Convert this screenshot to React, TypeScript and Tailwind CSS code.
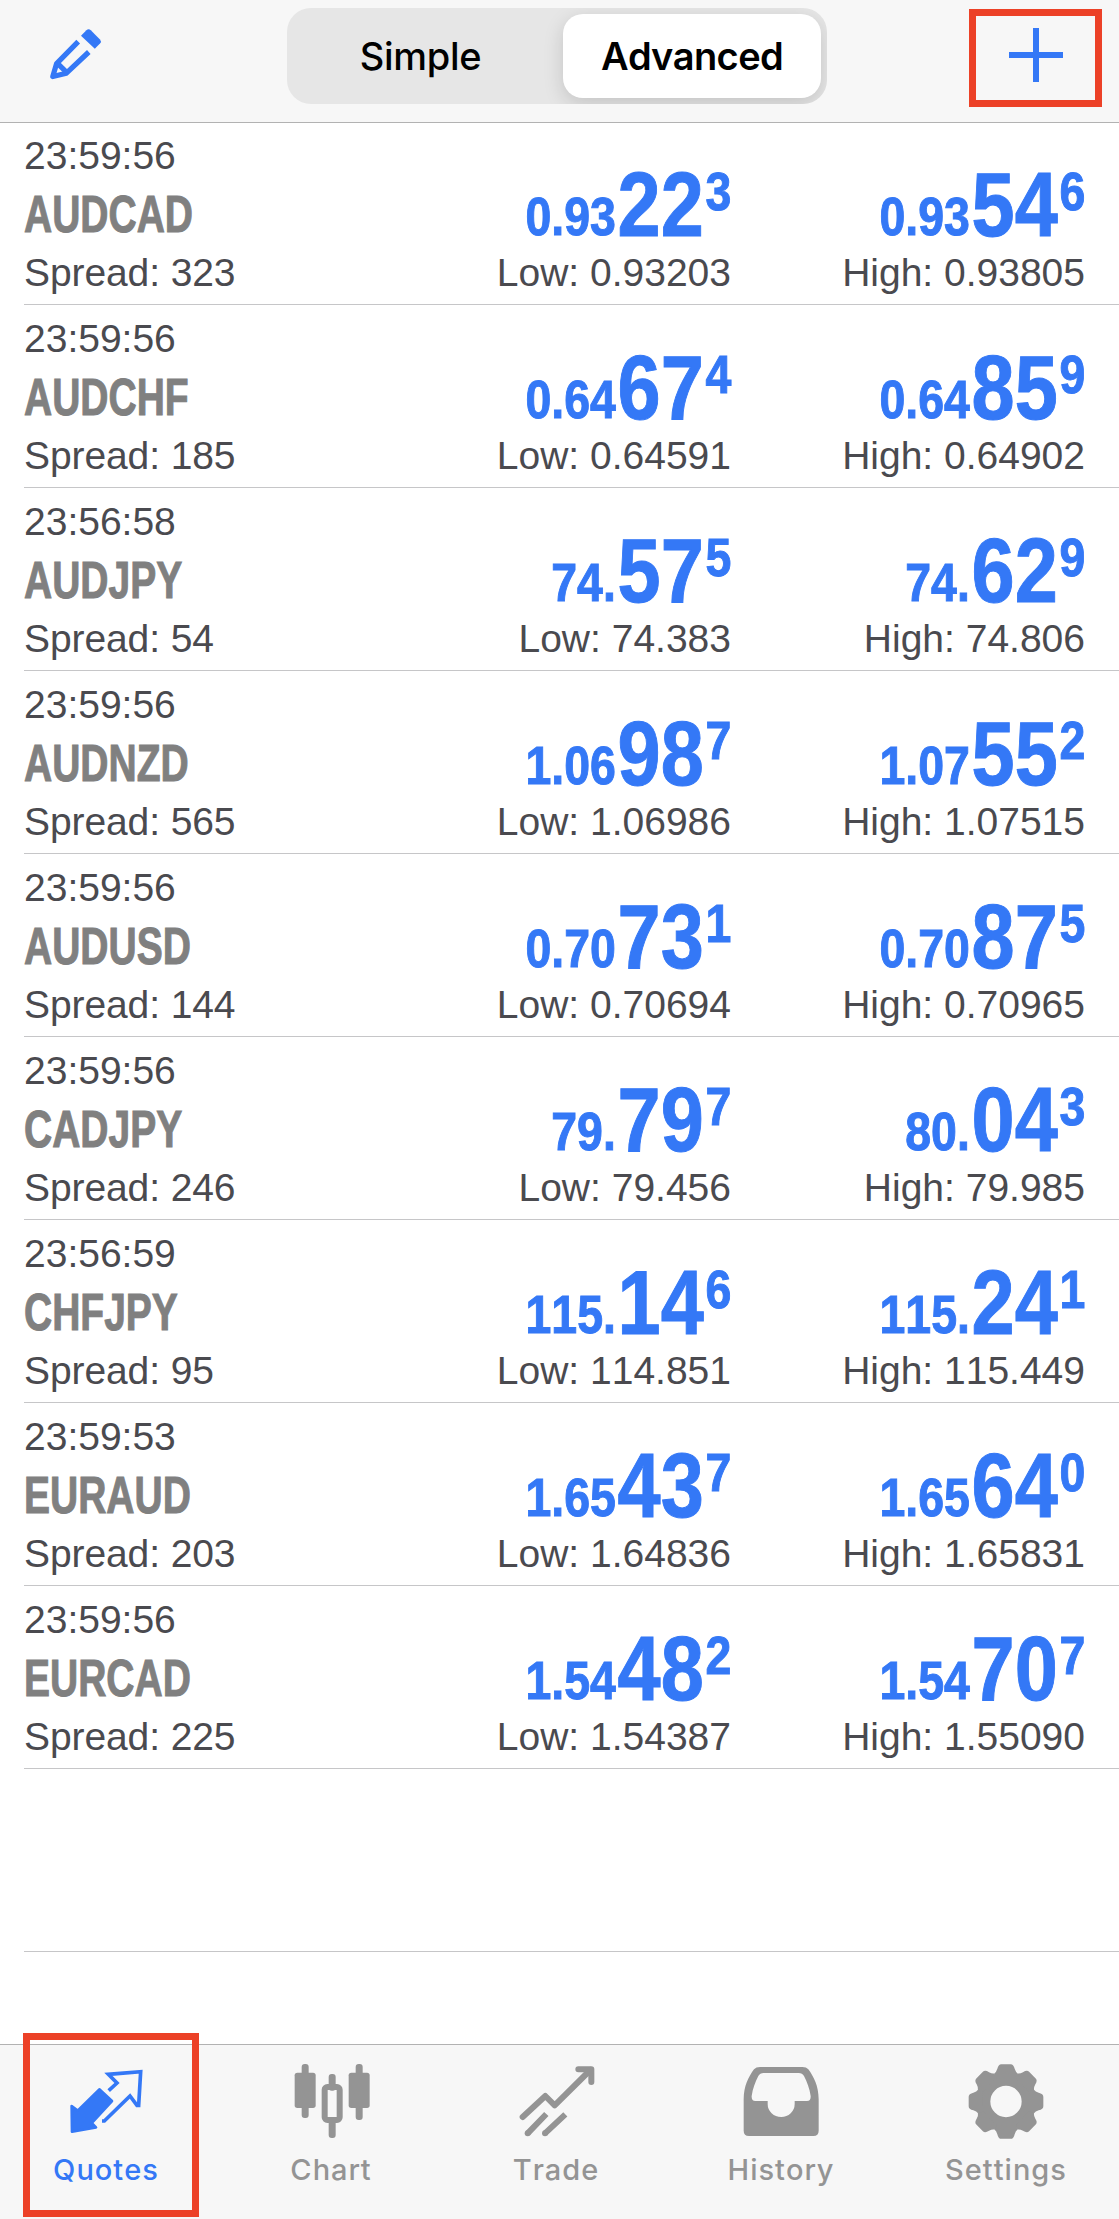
import type { ReactNode } from "react";
import clsx from "clsx";

type Price = [base: string, pips: string, point: string];

type Quote = {
  time: string;
  symbol: string;
  spread: number;
  bid: Price;
  ask: Price;
  low: string;
  high: string;
};

const quotes: Quote[] = [
  { time: "23:59:56", symbol: "AUDCAD", spread: 323, bid: ["0.93", "22", "3"], ask: ["0.93", "54", "6"], low: "0.93203", high: "0.93805" },
  { time: "23:59:56", symbol: "AUDCHF", spread: 185, bid: ["0.64", "67", "4"], ask: ["0.64", "85", "9"], low: "0.64591", high: "0.64902" },
  { time: "23:56:58", symbol: "AUDJPY", spread: 54, bid: ["74.", "57", "5"], ask: ["74.", "62", "9"], low: "74.383", high: "74.806" },
  { time: "23:59:56", symbol: "AUDNZD", spread: 565, bid: ["1.06", "98", "7"], ask: ["1.07", "55", "2"], low: "1.06986", high: "1.07515" },
  { time: "23:59:56", symbol: "AUDUSD", spread: 144, bid: ["0.70", "73", "1"], ask: ["0.70", "87", "5"], low: "0.70694", high: "0.70965" },
  { time: "23:59:56", symbol: "CADJPY", spread: 246, bid: ["79.", "79", "7"], ask: ["80.", "04", "3"], low: "79.456", high: "79.985" },
  { time: "23:56:59", symbol: "CHFJPY", spread: 95, bid: ["115.", "14", "6"], ask: ["115.", "24", "1"], low: "114.851", high: "115.449" },
  { time: "23:59:53", symbol: "EURAUD", spread: 203, bid: ["1.65", "43", "7"], ask: ["1.65", "64", "0"], low: "1.64836", high: "1.65831" },
  { time: "23:59:56", symbol: "EURCAD", spread: 225, bid: ["1.54", "48", "2"], ask: ["1.54", "70", "7"], low: "1.54387", high: "1.55090" },
];

function PencilIcon() {
  return (
    <svg viewBox="0 0 54 54" className="h-[54px] w-[54px]" fill="none" stroke="currentColor" strokeWidth={5.2}>
      <path d="M30.2 14.6 8.6 36.6 4.8 49.6 18.4 46.2 40.8 25" strokeLinejoin="round" />
      <path d="m9 35.8 10.4 10.4" />
      <path
        d="M33 8.8 38.4 3.2Q40.6 1.2 42.8 3.2L52 12.4Q53.8 14.4 52 16.4L46.8 21.8Z"
        fill="currentColor"
        stroke="none"
      />
    </svg>
  );
}

function TabSvg({ children }: { children: ReactNode }) {
  return (
    <svg viewBox="0 0 234 234" className="h-[78px] w-[78px] overflow-visible" fill="currentColor">
      {children}
    </svg>
  );
}

function QuotesIcon() {
  return (
    <TabSvg>
      <path
        d="M97 82 135 117 74 183 87 196 15 209 14 132 32 146Z"
        stroke="currentColor"
        strokeWidth={8}
        strokeLinejoin="round"
      />
      <path
        d="M125 86 150 63 124 37 221 29 215 130H210L189 102 112 177H105"
        fill="none"
        stroke="currentColor"
        strokeWidth={11}
      />
    </TabSvg>
  );
}

function ChartIcon() {
  return (
    <TabSvg>
      <rect x={29} y={6} width={21} height={162} rx={9} />
      <rect x={8} y={32} width={63} height={106} rx={8} />
      <rect x={110} y={36} width={21} height={50} rx={9} />
      <rect x={110} y={172} width={21} height={56} rx={9} />
      <rect x={98} y={75} width={45} height={99} rx={8} fill="none" stroke="currentColor" strokeWidth={18} />
      <rect x={191} y={6} width={21} height={168} rx={9} />
      <rect x={170} y={32} width={63} height={106} rx={8} />
    </TabSvg>
  );
}

function TradeIcon() {
  return (
    <TabSvg>
      <g fill="none" stroke="currentColor" strokeWidth={18}>
        <path d="M17 165 85 102 113 130 220 24" strokeLinecap="round" strokeLinejoin="round" />
        <path d="M184 22H223V60" strokeLinecap="round" strokeLinejoin="round" />
        <path d="M32 214 88 156M84 214 145 157" />
      </g>
      <circle cx={32} cy={214} r={9} />
      <circle cx={84} cy={214} r={9} />
    </TabSvg>
  );
}

function HistoryIcon() {
  return (
    <TabSvg>
      <path
        fillRule="evenodd"
        d="M5 112C5 72 20 44 36 22Q42 15 54 15H181Q193 15 199 22C215 44 230 72 230 112V206Q230 222 214 222H21Q5 222 5 206ZM65 33Q54 33 49 42C40 60 32 80 29 102Q28 117 40 117H77V126A40.5 39 0 0 0 158 126V117H195Q207 117 206 102C203 80 195 60 186 42Q181 33 170 33Z"
      />
    </TabSvg>
  );
}

function SettingsIcon() {
  return (
    <TabSvg>
      <circle cx={117} cy={118.5} r={67.5} fill="none" stroke="currentColor" strokeWidth={41} />
      {[0, 45, 90, 135, 180, 225, 270, 315].map((angle) => (
        <path
          key={angle}
          transform={`translate(117 118.5) rotate(${angle})`}
          d="M-30-70-35-84Q-29-88-26-98-23-112-14-112H14Q23-112 26-98 29-88 35-84L30-70Z"
        />
      ))}
    </TabSvg>
  );
}

const tabs = [
  { label: "Quotes", icon: <QuotesIcon />, active: true },
  { label: "Chart", icon: <ChartIcon /> },
  { label: "Trade", icon: <TradeIcon /> },
  { label: "History", icon: <HistoryIcon /> },
  { label: "Settings", icon: <SettingsIcon /> },
];

function PriceCell({ price, label, value }: { price: Price; label: string; value: string }) {
  const [base, pips, point] = price;
  return (
    <div className="flex flex-col items-end justify-end whitespace-nowrap">
      <div className="mb-[2px] flex h-[87px] origin-right scale-x-[0.86] items-baseline font-bold leading-[87px] text-[#3478f6] [-webkit-text-stroke:1px_#3478f6]">
        <span className="mr-[2px] -translate-y-px text-[54px]">{base}</span>
        <span className="mr-[2px] text-[90px]">{pips}</span>
        <span className="-translate-y-[26px] text-[54px]">{point}</span>
      </div>
      <div className="h-11 text-[39px] leading-[44px]">
        {label}: {value}
      </div>
    </div>
  );
}

function QuoteRow({ quote }: { quote: Quote }) {
  return (
    <li className="ml-6 grid h-[183px] grid-cols-[353px_354px_354px] border-b border-[#c6c6c8] pb-[9px] text-[#4a4a4f]">
      <div className="flex flex-col justify-end whitespace-nowrap text-[39px] leading-[44px]">
        <div>{quote.time}</div>
        <div className="h-[73px] origin-left scale-x-[0.75] text-[52px] font-bold leading-[73px] text-[#808080] [-webkit-text-stroke:1px_#808080]">
          {quote.symbol}
        </div>
        <div className="tracking-[-0.1px]">Spread: {quote.spread}</div>
      </div>
      <PriceCell price={quote.bid} label="Low" value={quote.low} />
      <PriceCell price={quote.ask} label="High" value={quote.high} />
    </li>
  );
}

export default function App() {
  return (
    <div className="flex h-[2219px] w-[1119px] flex-col overflow-hidden bg-white font-['Liberation_Sans',Arial,sans-serif] [font-kerning:none]">
      <header className="relative flex h-[122px] shrink-0 items-start bg-[#f7f7f7] shadow-[0_1px_0_#b2b2b2]">
        <button type="button" aria-label="Edit" className="ml-[48px] mt-[27px] text-[#3478f6]">
          <PencilIcon />
        </button>
        <div className="ml-[185px] mt-2 flex h-24 w-[540px] overflow-hidden rounded-[24px] bg-[#e6e6e6] p-[6px] font-['Inter',sans-serif] text-[38px] text-black">
          <button type="button" className="w-[270px] pr-[15px] font-medium leading-[85px] tracking-[-0.3px]">
            Simple
          </button>
          <button
            type="button"
            className="h-[84px] w-[258px] rounded-[20px] bg-white font-semibold leading-[85px] tracking-[-0.6px] shadow-[0_6px_20px_rgba(0,0,0,0.15)]"
          >
            Advanced
          </button>
        </div>
        <button
          type="button"
          aria-label="Add symbol"
          className="ml-[142px] mt-[9px] flex h-[98px] w-[133px] items-start justify-center border-[7px] border-[#ec4127] pt-3 text-[#3478f6]"
        >
          <svg viewBox="0 0 54 54" className="h-[54px] w-[54px]" fill="currentColor">
            <path d="M24 0h6v24h24v6H30v24h-6V30H0v-6h24z" />
          </svg>
        </button>
      </header>

      <ul className="flex-1">
        {quotes.map((quote) => (
          <QuoteRow key={quote.symbol} quote={quote} />
        ))}
        <li className="ml-6 h-[183px] border-b border-[#c6c6c8]" />
      </ul>

      <nav className="relative flex h-[175px] shrink-0 border-t border-[#b2b2b2] bg-[#f7f7f7]">
        <div className="-ml-[7px] flex">
          {tabs.map((tab) => (
            <button
              key={tab.label}
              type="button"
              className={clsx(
                "flex w-[225px] flex-col items-center pt-[17px] font-['Inter',sans-serif] text-[29px] font-medium leading-[36px] tracking-[1px]",
                tab.active ? "text-[#3478f6]" : "text-[#949494]",
              )}
            >
              {tab.icon}
              <span className="ml-px mt-[12px]">{tab.label}</span>
            </button>
          ))}
        </div>
        <div className="pointer-events-none absolute -top-3 left-[23px] h-[184px] w-[176px] border-[7px] border-[#ec4127]" />
      </nav>
    </div>
  );
}
